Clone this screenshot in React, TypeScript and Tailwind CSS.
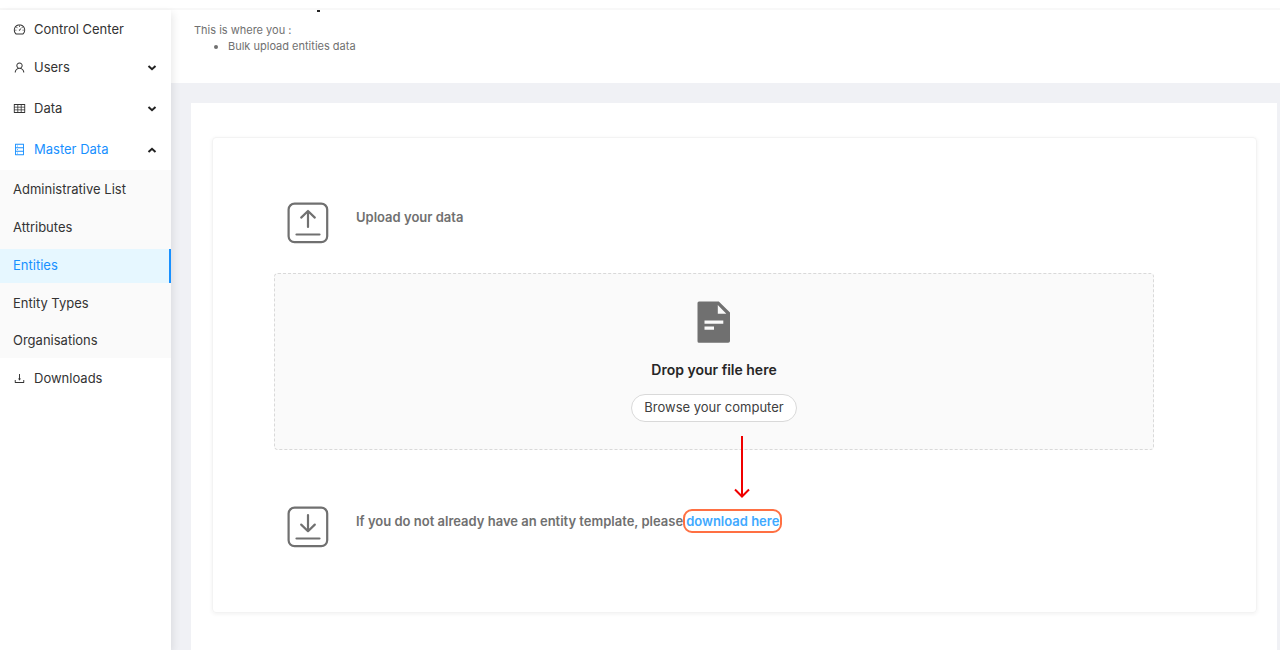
import { useState } from "react";
import type { ReactNode } from "react";
import {
  AiOutlineDashboard,
  AiOutlineDatabase,
  AiOutlineDownload,
  AiOutlineTable,
  AiOutlineUser,
} from "react-icons/ai";

function Chevron({ up = false }: { up?: boolean }) {
  return (
    <svg viewBox="0 0 10 10" className="size-[10px]" fill="none" stroke="#222" strokeWidth="2" aria-hidden="true">
      <path d={up ? "M1.5 7 5 3.8 8.5 7" : "M1.5 3 5 6.2 8.5 3"} />
    </svg>
  );
}

function GroupButton({ icon, label, open = false }: { icon: ReactNode; label: string; open?: boolean }) {
  return (
    <button
      type="button"
      aria-expanded={open}
      className={
        "flex h-[41px] w-full items-center gap-2 pr-[14px] pl-[13px] text-left " +
        (open ? "text-[#1890ff]" : "text-[#333333]")
      }
    >
      {icon}
      <span className="flex-1">{label}</span>
      <Chevron up={open} />
    </button>
  );
}

const masterData = ["Administrative List", "Attributes", "Entities", "Entity Types", "Organisations"];

function Sidebar() {
  const [active, setActive] = useState("Entities");
  return (
    <nav className="z-10 w-[171px] shrink-0 bg-white pt-[2px] text-[13px] text-[#333333] shadow-[2px_3px_8px_rgba(0,0,0,0.09)]">
      <a href="#control-center" className="flex h-[35px] items-center gap-2 pl-[13px]">
        <AiOutlineDashboard className="size-[13px]" />
        Control Center
      </a>
      <GroupButton icon={<AiOutlineUser className="size-[13px]" />} label="Users" />
      <GroupButton icon={<AiOutlineTable className="size-[13px]" />} label="Data" />
      <GroupButton icon={<AiOutlineDatabase className="size-[13px]" />} label="Master Data" open />
      <ul className="flex h-[188px] flex-col justify-between bg-[#fafafa] pt-[3px]">
        {masterData.map((item) => (
          <li key={item}>
            <a
              href="#master-data"
              onClick={() => setActive(item)}
              className={
                "flex h-[34px] items-center pl-[13px] " +
                (item === active ? "border-r-2 border-[#1890ff] bg-[#e6f7ff] text-[#1890ff]" : "")
              }
            >
              {item}
            </a>
          </li>
        ))}
      </ul>
      <a href="#downloads" className="flex h-[41px] items-center gap-2 pl-[13px]">
        <AiOutlineDownload className="size-[13px]" />
        Downloads
      </a>
    </nav>
  );
}

function TransferIcon({ down = false }: { down?: boolean }) {
  return (
    <svg
      viewBox="0 0 42 42"
      className="size-[42px] shrink-0"
      fill="none"
      stroke="#707070"
      strokeWidth="2.2"
      strokeLinecap="round"
      strokeLinejoin="round"
      aria-hidden="true"
    >
      <rect x="1.6" y="1.6" width="38.6" height="38.6" rx="6" />
      <path d={down ? "M21 9v16M14.2 18.6 21 25.2l6.800-6.600" : "M21 25V9M14.200 15.600 21 9l6.800 6.600"} />
      <path d="M9.500 32.500h23" />
    </svg>
  );
}

function FileIcon() {
  return (
    <svg viewBox="0 0 34 42" className="h-[42px] w-[34px]" aria-hidden="true">
      <path
        fill="#707070"
        fillRule="evenodd"
        d="M2 .5h19.800L33 11.500V40a1.800 1.800 0 0 1-1.800 1.800H2A1.500 1.500 0 0 1 .5 40.300V2A1.500 1.500 0 0 1 2 .5ZM20.800 4v8.800h8.500ZM7.500 19.500v3.200h18.800v-3.200ZM7.500 25.600v3.200h9.500v-3.200Z"
      />
    </svg>
  );
}

export default function App() {
  return (
    <div className="flex min-h-screen flex-col bg-white font-['Inter',sans-serif]">
      <header className="h-[10px] shrink-0 border-b-2 border-[#f8f8f8] bg-white" />
      <div className="flex flex-1">
        <Sidebar />
        <main className="flex min-w-0 flex-1 flex-col bg-[#f0f1f5]">
          <section className="h-[73px] bg-white pl-[23px] text-[11px] leading-4 text-[#707070]">
            <div className="ml-[123px] h-[2px] w-[3px] bg-[#262626]" />
            <p className="mt-[10px]">This is where you :</p>
            <ul className="list-disc pl-[34px]">
              <li>Bulk upload entities data</li>
            </ul>
          </section>
          <div className="mt-5 mr-[3px] ml-5 flex-1 bg-white pt-[34px] pr-5 pb-[37px] pl-[21px]">
            <div className="rounded border border-[#f3f3f3] pt-16 pr-[102px] pb-16 pl-[61px] shadow-[0_1px_4px_rgba(0,0,0,0.06)]">
              <div className="flex gap-[27px] pl-[13px]">
                <TransferIcon />
                <h2 className="pt-[5px] text-[13px] leading-5 font-semibold text-[#707070]">Upload your data</h2>
              </div>
              <div className="mt-[29px] flex h-[177px] flex-col items-center rounded-sm border border-dashed border-[#d9d9d9] bg-[#fafafa] pt-[27px]">
                <FileIcon />
                <p className="mt-[15px] text-[14px] leading-6 font-semibold text-[#262626]">Drop your file here</p>
                <button
                  type="button"
                  className="mt-3 h-7 rounded-full border border-[#d9d9d9] bg-white px-3 text-[13px] text-[#404040]"
                >
                  Browse your computer
                </button>
              </div>
              <div className="mt-14 flex gap-[27px] pl-[13px]">
                <TransferIcon down />
                <p className="pt-[3px] text-[13px] leading-6 font-semibold whitespace-nowrap text-[#707070]">
                  If you do not already have an entity template, please
                  <span className="relative inline-block">
                    <a
                      href="#template"
                      className="block h-6 rounded-[9px] border-2 border-[#ff7043] px-px leading-5 text-[#40a9ff]"
                    >
                      download here
                    </a>
                    <svg
                      viewBox="0 0 16 62"
                      className="absolute bottom-[35px] left-[51px] h-[62px] w-4"
                      fill="none"
                      stroke="#f00000"
                      strokeWidth="2"
                      aria-hidden="true"
                    >
                      <path d="M8 0v60M1 53.500l7 7 7-7" />
                    </svg>
                  </span>
                </p>
              </div>
            </div>
          </div>
        </main>
      </div>
    </div>
  );
}
